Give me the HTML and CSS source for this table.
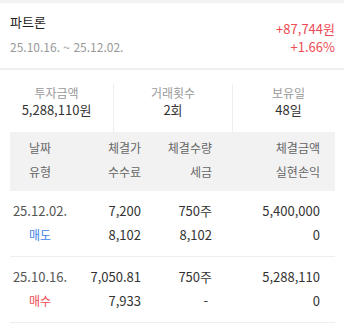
FILE: index.html
```html
<!DOCTYPE html>
<html lang="ko">
<head>
<meta charset="utf-8">
<link rel="stylesheet" href="styles.css">
</head>
<body>
<div class="topbar"></div>
<section class="header">
  <div class="title-block">
    <div class="name">파트론</div>
    <div class="period">25.10.16. ~ 25.12.02.</div>
  </div>
  <div class="profit">
    <div class="profit-amount">+87,744원</div>
    <div class="profit-rate">+1.66%</div>
  </div>
</section>
<section class="stats">
  <div class="stat">
    <div class="stat-label">투자금액</div>
    <div class="stat-value">5,288,110원</div>
  </div>
  <div class="stat stat-divided">
    <div class="stat-label">거래횟수</div>
    <div class="stat-value">2회</div>
  </div>
  <div class="stat stat-divided">
    <div class="stat-label">보유일</div>
    <div class="stat-value">48일</div>
  </div>
</section>
<section class="table">
  <div class="thead">
    <div class="c1">날짜</div><div class="c2">체결가</div><div class="c3">체결수량</div><div class="c4">체결금액</div>
    <div class="c1">유형</div><div class="c2">수수료</div><div class="c3">세금</div><div class="c4">실현손익</div>
  </div>
  <div class="trow">
    <div class="c1 date">25.12.02.</div><div class="c2">7,200</div><div class="c3">750주</div><div class="c4">5,400,000</div>
    <div class="c1 sell">매도</div><div class="c2">8,102</div><div class="c3">8,102</div><div class="c4">0</div>
  </div>
  <div class="trow">
    <div class="c1 date">25.10.16.</div><div class="c2">7,050.81</div><div class="c3">750주</div><div class="c4">5,288,110</div>
    <div class="c1 buy">매수</div><div class="c2">7,933</div><div class="c3 dash">-</div><div class="c4">0</div>
  </div>
</section>
</body>
</html>
```

FILE: styles.css
```css
* { box-sizing: border-box; }
html, body {
  margin: 0;
  padding: 0;
  background: #ffffff;
  font-family: "Noto Sans CJK KR", "Noto Sans", sans-serif;
  color: #333333;
  font-size: 13px;
}
.topbar {
  height: 3px;
  background: #f2f2f4;
}
.header {
  display: flex;
  justify-content: space-between;
  padding: 10px 9px 0 10px;
  height: 67px;
  border-bottom: 2px solid #efefef;
}
.name {
  font-size: 13px;
  line-height: 18px;
  color: #222222;
}
.period {
  margin-top: 7px;
  font-size: 12px;
  line-height: 18px;
  color: #999999;
}
.profit {
  text-align: right;
  color: #ee4b55;
  font-size: 13px;
  padding-top: 7px;
}
.profit-amount { line-height: 18px; }
.profit-rate { line-height: 18px; }
.stats {
  display: grid;
  grid-template-columns: 113px 119px 1fr;
  padding: 14px 0 0;
  height: 62px;
}
.stat {
  text-align: center;
}
.stat-divided {
  border-left: 1px solid #eeeeee;
}
.stat-label {
  color: #999999;
  font-size: 12px;
  line-height: 17px;
}
.stat-value {
  color: #333333;
  font-size: 13px;
  line-height: 18px;
}
.table {
  margin: 0 9px 0 10px;
}
.thead, .trow {
  display: grid;
  grid-template-columns: 60px 71px 71px 108px;
  padding-right: 15px;
  line-height: 24px;
}
.thead {
  background: #f2f2f2;
  color: #666666;
  font-size: 12px;
  padding-top: 4px;
  padding-bottom: 7px;
}
.trow {
  padding-top: 8px;
  padding-bottom: 9px;
  border-bottom: 1px solid #eeeeee;
}
.c1 { text-align: center; }
.c2, .c3, .c4 { text-align: right; }
.date { color: #555555; }
.sell { color: #3d7fe8; font-size: 12px; }
.buy { color: #ee4b55; font-size: 12px; }
.dash { padding-right: 4px; }
```
